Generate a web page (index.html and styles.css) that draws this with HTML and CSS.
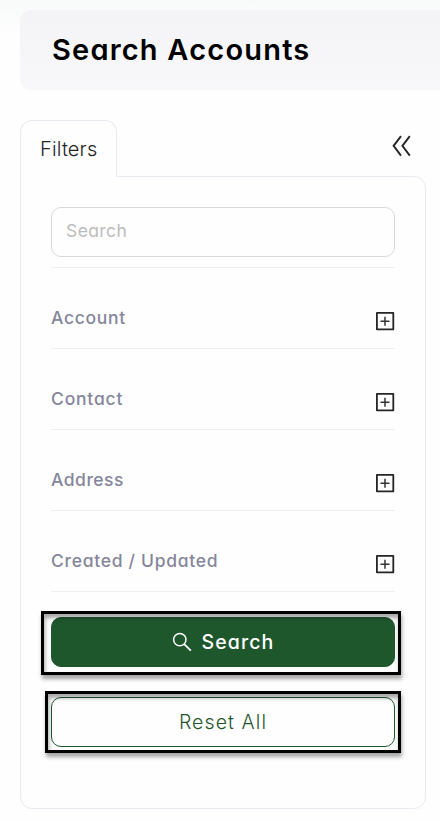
FILE: index.html
```html
<!DOCTYPE html>
<html lang="en">
<head>
<meta charset="utf-8">
<title>Search Accounts</title>
<link rel="stylesheet" href="styles.css">
</head>
<body>
<svg class="sprite" aria-hidden="true">
  <symbol id="plus" viewBox="0 0 20 20">
    <path d="M1.9 1.9h16.4v16.4H1.9z" fill="none" stroke="#252525" stroke-width="1.8" stroke-linejoin="round"/>
    <path d="M10 5.7v9M5.5 10.2h9" stroke="#333" stroke-width="1.5"/>
  </symbol>
</svg>
<header class="page-header"><h1><span>Search Accounts</span></h1></header>
<main class="filters">
  <div class="tabs">
    <div class="tab"><span>Filters</span></div>
    <svg class="collapse" viewBox="0 0 20 22"><path d="M9 1.2 1.6 10.8 9 20.6M17.8 1.2l-7.4 9.6 7.4 9.8" fill="none" stroke="#252525" stroke-width="1.9"/></svg>
  </div>
  <section class="panel">
    <div class="field"><span>Search</span></div>
    <div class="group"><span class="account">Account</span><svg><use href="#plus"/></svg></div>
    <div class="group"><span class="contact">Contact</span><svg><use href="#plus"/></svg></div>
    <div class="group"><span class="address">Address</span><svg><use href="#plus"/></svg></div>
    <div class="group"><span class="dates">Created / Updated</span><svg><use href="#plus"/></svg></div>
    <div class="action">
      <button class="btn primary"><svg viewBox="0 0 20 20"><circle cx="7.8" cy="7.6" r="6.2" fill="none" stroke="#fff" stroke-width="1.5"/><path d="m12.2 12.1 6.6 6.5" stroke="#fff" stroke-width="1.8"/></svg><span>Search</span></button>
      <i class="callout first"></i>
    </div>
    <div class="action">
      <button class="btn outline"><span>Reset All</span></button>
      <i class="callout second"></i>
    </div>
  </section>
</main>
</body>
</html>
```
FILE: styles.css
```css
* { box-sizing: border-box; }
body {
  margin: 0;
  padding: 10px 0 0 20px;
  height: 822px;
  overflow: hidden;
  background: linear-gradient(#f8fafa, #fefefe 35px, #fefefe);
  font-family: Inter, "Open Sans", sans-serif;
  font-feature-settings: "cv11", "ss03";
  color: #252525;
}
.sprite { display: none; }
.page-header {
  height: 80px;
  padding-left: 32px;
  display: flex;
  align-items: center;
  border-radius: 10px 0 0 10px;
  background: linear-gradient(#f4f4f7, #f8f8fb);
}
h1 { margin: 0; font-size: 29px; line-height: 40px; font-weight: 600; color: #000; letter-spacing: 1.2px; white-space: nowrap; }
.filters { width: 406px; margin-top: 30px; }
.tabs { display: flex; justify-content: space-between; height: 57px; }
.tab {
  width: 97px;
  height: 57px;
  padding: 0 0 0 19px;
  border: 1px solid #e9e9f0;
  border-bottom: 0;
  border-radius: 12px 12px 0 0;
  background: #fefefe;
  font-size: 20px;
  line-height: 56px;
  font-weight: 300;
  letter-spacing: 0.15px;
  position: relative;
  z-index: 1;
}
.collapse { width: 20px; height: 22px; margin: 15px 14px 0 0; }
.panel {
  height: 633px;
  margin-top: -1px;
  padding: 30px;
  border: 1px solid #e9e9f0;
  border-radius: 0 12px 12px 12px;
}
.field {
  height: 50px;
  border: 1px solid #d9d9d9;
  border-radius: 10px;
  padding-left: 14px;
  font-size: 17.5px;
  line-height: 46px;
  letter-spacing: 0.4px;
  color: #bcbcbc;
  margin-bottom: 10px;
}
.group {
  height: 81px;
  border-top: 1px solid #eeeef2;
  display: flex;
  justify-content: space-between;
  font-size: 17.5px;
  line-height: 24px;
  font-weight: 500;
  letter-spacing: 0.7px;
  color: #85869b;
  padding-top: 38px;
}
.contact { letter-spacing: 0.8px; }
.address { letter-spacing: 0.5px; }
.group svg { width: 20px; height: 20px; margin-top: 5px; }
.action { position: relative; height: 80px; }
.group + .action { border-top: 1px solid #eeeef2; padding-top: 25px; height: 106px; }
.btn {
  width: 100%;
  height: 50px;
  padding: 0;
  border: 1px solid #1f572d;
  border-radius: 10px;
  display: flex;
  align-items: center;
  justify-content: center;
  font: inherit;
  font-feature-settings: inherit;
  font-size: 19.5px;
}
.primary { background: #1f572d; color: #fff; gap: 10px; font-weight: 500; letter-spacing: 1.1px; }
.primary svg { width: 20px; height: 20px; }
.outline { background: transparent; color: #1f572d; font-weight: 300; letter-spacing: 1.1px; }
.callout {
  position: absolute;
  border: 3px solid #000;
  pointer-events: none;
  box-shadow: 1px 4px 4px rgba(0, 0, 0, 0.35), inset 1px 4px 4px rgba(0, 0, 0, 0.35);
}
.first { top: 19px; left: -10px; right: -6px; height: 64px; }
.second { top: -6px; left: -6px; right: -6px; height: 62px; }
```
